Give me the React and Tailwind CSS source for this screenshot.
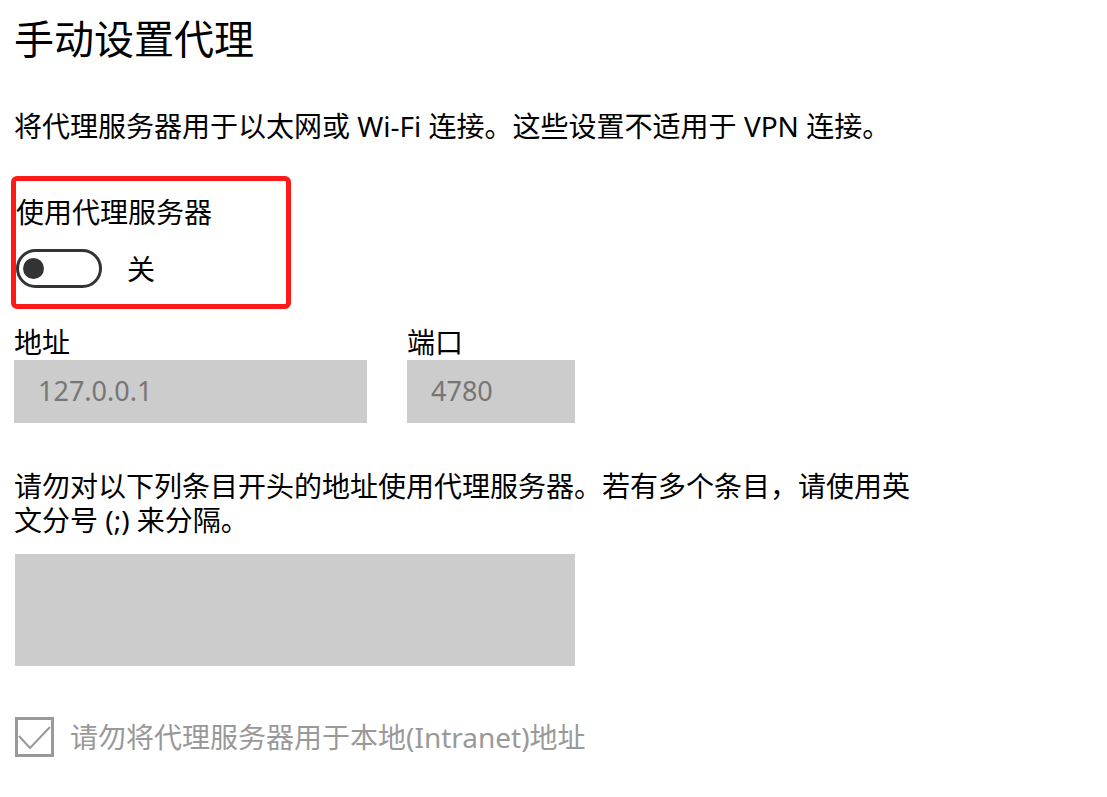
import React from 'react'

const font = { fontFamily: '"Noto Sans", "Noto Sans CJK SC", sans-serif' }

function Toggle() {
  return (
    <div className="flex items-center">
      <div className="w-[86px] h-[39px] rounded-full border-[3px] border-[#333333] flex items-center pl-[4px]">
        <div className="w-[21px] h-[21px] rounded-full bg-[#333333]" />
      </div>
      <span className="ml-[25px] text-[28px] leading-[36px] text-black">关</span>
    </div>
  )
}

function CheckBox() {
  return (
    <div className="w-[39px] h-[40px] border-[3px] border-[#999999] flex items-center justify-center">
      <svg width="33" height="34" viewBox="0 0 33 34" fill="none">
        <polyline
          points="1,16 12,28 32,7"
          stroke="#999999"
          strokeWidth="2"
          fill="none"
        />
      </svg>
    </div>
  )
}

export default function App() {
  return (
    <div className="w-[1107px] h-[797px] bg-white text-black overflow-hidden" style={font}>
      <div className="pl-[14px]">
        {/* title */}
        <h1 className="pt-[14px] text-[40px] leading-[50px] font-normal">手动设置代理</h1>

        <p className="mt-[44px] text-[28px] leading-[36px]">
          将代理服务器用于以太网或 Wi-Fi 连接。这些设置不适用于 VPN 连接。
        </p>
      </div>

      {/* red annotation box */}
      <div className="ml-[11px] mt-[32px] w-[280px] h-[133px] border-[5px] border-[#ff1a1a] rounded-[6px] pt-[13px]">
        <div className="text-[28px] leading-[36px]">使用代理服务器</div>
        <div className="mt-[19px]">
          <Toggle />
        </div>
      </div>

      <div className="pl-[14px]">
        <div className="mt-[15px] flex gap-[40px]">
          <div className="flex flex-col">
            <label className="text-[28px] leading-[36px]">地址</label>
            <div className="w-[353px] h-[63px] bg-[#cccccc] flex items-center pl-[24px] text-[27px] text-[#767676]">
              127.0.0.1
            </div>
          </div>
          <div className="flex flex-col">
            <label className="text-[28px] leading-[36px]">端口</label>
            <div className="w-[168px] h-[63px] bg-[#cccccc] flex items-center pl-[24px] text-[27px] text-[#767676]">
              4780
            </div>
          </div>
        </div>

        <p className="mt-[46px] w-[904px] text-[28px] leading-[34px]">
          请勿对以下列条目开头的地址使用代理服务器。若有多个条目，请使用英文分号 (;) 来分隔。
        </p>

        <div className="mt-[17px] ml-[1px] w-[560px] h-[112px] bg-[#cccccc]" />

        <div className="mt-[51px] ml-[1px] flex items-center gap-[16px]">
          <CheckBox />
          <span className="text-[28px] leading-[36px] text-[#999999]">
            请勿将代理服务器用于本地(Intranet)地址
          </span>
        </div>
      </div>
    </div>
  )
}
